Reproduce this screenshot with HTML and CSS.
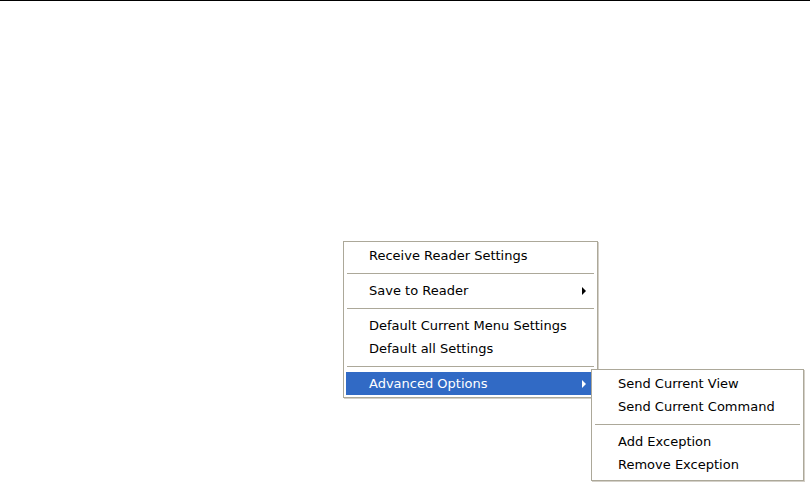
FILE: index.html
```html
<!DOCTYPE html>
<html>
<head>
<meta charset="utf-8">
<link rel="stylesheet" href="styles.css">
</head>
<body>
<div class="page">
  <div class="topline"></div>
  <div class="menu main-menu">
    <div class="item">Receive Reader Settings</div>
    <div class="sep"></div>
    <div class="item">Save to Reader<span class="arrow"></span></div>
    <div class="sep"></div>
    <div class="item">Default Current Menu Settings</div>
    <div class="item">Default all Settings</div>
    <div class="sep"></div>
    <div class="item active">Advanced Options<span class="arrow"></span></div>
  </div>
  <div class="menu sub-menu">
    <div class="item">Send Current View</div>
    <div class="item">Send Current Command</div>
    <div class="sep"></div>
    <div class="item">Add Exception</div>
    <div class="item">Remove Exception</div>
  </div>
</div>
</body>
</html>
```
FILE: styles.css
```css
html, body {
  margin: 0;
  padding: 0;
  background: #ffffff;
}
.page {
  position: relative;
  width: 810px;
  height: 482px;
  overflow: hidden;
  font-family: "DejaVu Sans", "Liberation Sans", sans-serif;
  font-size: 13px;
  color: #000;
}
.topline {
  height: 1px;
  background: #000;
}
.menu {
  position: absolute;
  background: #fff;
  border: 1px solid #aca899;
  box-shadow: 1px 1px 0 #d4d0c8;
  padding: 2px 2px;
  box-sizing: border-box;
}
.main-menu {
  left: 343px;
  top: 241px;
  width: 255px;
}
.sub-menu {
  left: 591px;
  top: 369px;
  width: 213px;
  padding-bottom: 4px;
}
.item {
  position: relative;
  height: 23px;
  line-height: 23px;
  padding-left: 23px;
  white-space: nowrap;
}
.sub-menu .item {
  padding-left: 24px;
}
.item.active {
  background: #316ac5;
  color: #fff;
}
.sep {
  height: 12px;
  display: flex;
  align-items: center;
  padding: 0 1px;
}
.sep::before {
  content: "";
  display: block;
  flex: 1;
  height: 1px;
  background: #aca899;
}
.arrow {
  position: absolute;
  right: 9px;
  top: 8px;
  width: 0;
  height: 0;
  border-top: 4px solid transparent;
  border-bottom: 4px solid transparent;
  border-left: 4px solid #000;
}
.item.active .arrow {
  border-left-color: #fff;
}
```
